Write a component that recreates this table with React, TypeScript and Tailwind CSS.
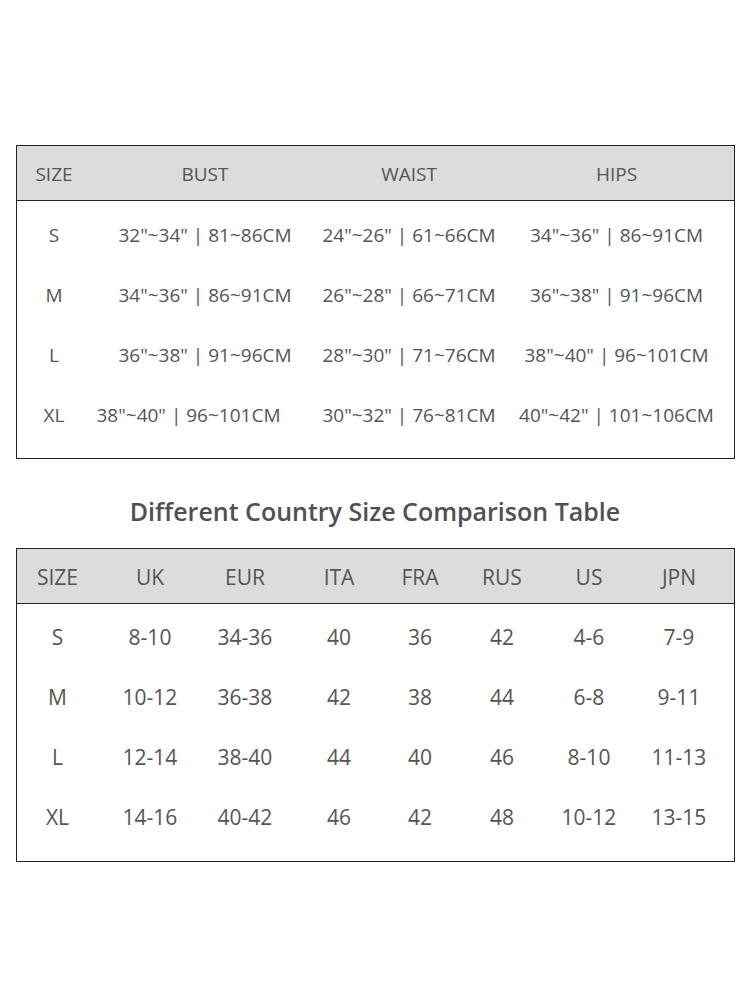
const font = { fontFamily: '"Open Sans", "Noto Sans", sans-serif' };

const bodyRows = [
  { size: 'S', bust: '32"~34" | 81~86CM', waist: '24"~26" | 61~66CM', hips: '34"~36" | 86~91CM' },
  { size: 'M', bust: '34"~36" | 86~91CM', waist: '26"~28" | 66~71CM', hips: '36"~38" | 91~96CM' },
  { size: 'L', bust: '36"~38" | 91~96CM', waist: '28"~30" | 71~76CM', hips: '38"~40" | 96~101CM' },
  { size: 'XL', bust: '38"~40" | 96~101CM', waist: '30"~32" | 76~81CM', hips: '40"~42" | 101~106CM' },
];

const countryHead = ['SIZE', 'UK', 'EUR', 'ITA', 'FRA', 'RUS', 'US', 'JPN'];
const countryRows = [
  ['S', '8-10', '34-36', '40', '36', '42', '4-6', '7-9'],
  ['M', '10-12', '36-38', '42', '38', '44', '6-8', '9-11'],
  ['L', '12-14', '38-40', '44', '40', '46', '8-10', '11-13'],
  ['XL', '14-16', '40-42', '46', '42', '48', '10-12', '13-15'],
];

const grid1 = 'grid grid-cols-[74px_228px_180px_1fr]';
const grid2 = 'grid grid-cols-[81px_104px_86px_102px_60px_104px_70px_1fr]';

export default function App() {
  return (
    <div className="w-[750px] h-[1000px] bg-white text-[#555]" style={font}>
      <div className="pt-[145px] px-4">
        <div className="w-[719px] border border-[#222]">
          <div className={`${grid1} h-[55px] pt-[3px] items-center bg-[#dcdcdc] border-b border-[#222] text-[19px] text-center`}>
            <div>SIZE</div>
            <div>BUST</div>
            <div>WAIST</div>
            <div>HIPS</div>
          </div>
          <div className="pt-[4px] pb-[13px] text-[19px] text-center">
            {bodyRows.map((r) => (
              <div key={r.size} className={`${grid1} h-[60px] items-center`}>
                <div>{r.size}</div>
                <div className={r.size === 'XL' ? 'pr-[33px]' : ''}>{r.bust}</div>
                <div>{r.waist}</div>
                <div>{r.hips}</div>
              </div>
            ))}
          </div>
        </div>

        <h2 className="h-[89px] flex items-center justify-center text-[25px] font-semibold text-[#505050] pt-[16px]">
          Different Country Size Comparison Table
        </h2>

        <div className="w-[719px] border border-[#222]">
          <div className={`${grid2} h-[55px] pt-[3px] items-center bg-[#dcdcdc] border-b border-[#222] text-[21px] text-center`}>
            {countryHead.map((h) => (
              <div key={h}>{h}</div>
            ))}
          </div>
          <div className="pt-[4px] pb-[13px] text-[21px] text-center">
            {countryRows.map((r) => (
              <div key={r[0]} className={`${grid2} h-[60px] items-center`}>
                {r.map((c, i) => (
                  <div key={i}>{c}</div>
                ))}
              </div>
            ))}
          </div>
        </div>
      </div>
    </div>
  );
}
